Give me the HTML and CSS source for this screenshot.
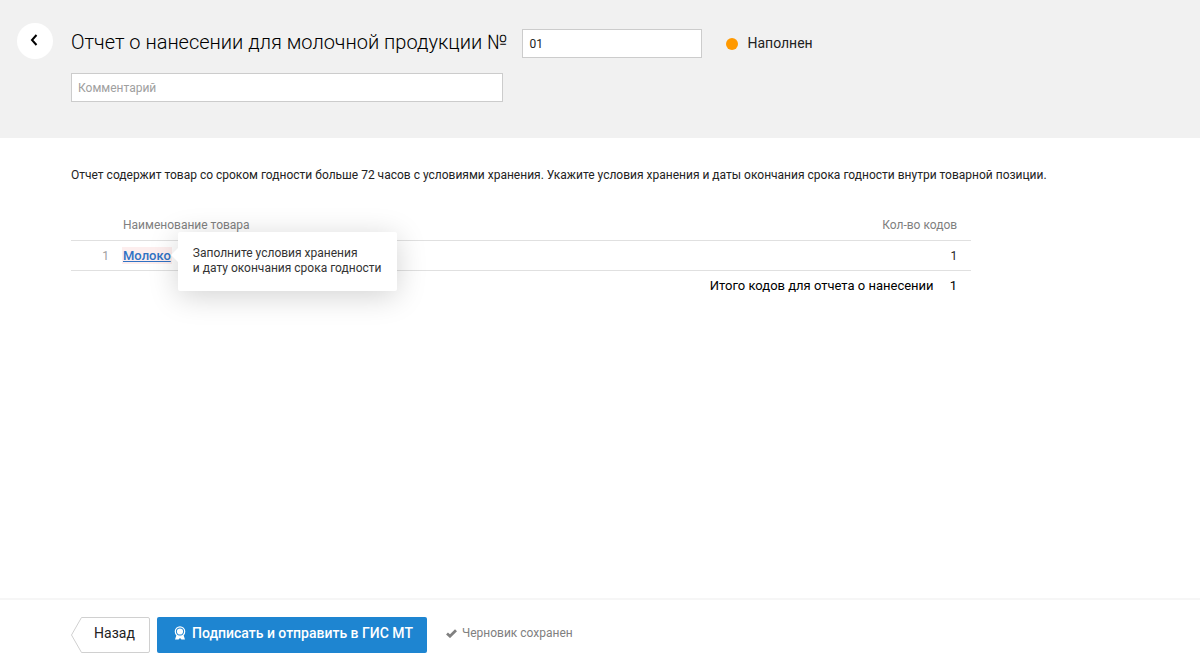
FILE: index.html
```
<!DOCTYPE html>
<html lang="ru">
<head>
    <meta charset="UTF-8">
    <meta name="viewport" content="width=device-width, initial-scale=1.0">
    <title>Отчет о нанесении для молочной продукции</title>
    <link rel="stylesheet" href="styles.css">
</head>
<body>
    <header class="header">
        <button type="button" class="round-btn" aria-label="Вернуться">
            <svg width="8" height="12" viewBox="0 0 8 12">
                <path d="M6.500 1L2 6l4.500 5" fill="none" stroke="#000" stroke-width="2"/>
            </svg>
        </button>
        <div class="header-content">
            <div class="title-row">
                <h1><label for="reportNumber">Отчет о нанесении для молочной продукции №</label></h1>
                <input type="text" id="reportNumber" class="input number-input" value="01">
                <span class="status">Наполнен</span>
            </div>
            <input type="text" class="input comment-input" placeholder="Комментарий" aria-label="Комментарий">
        </div>
    </header>

    <main class="content">
        <p class="notice">Отчет содержит товар со сроком годности больше 72 часов с условиями хранения. Укажите условия хранения и даты окончания срока годности внутри товарной позиции.</p>

        <table class="goods">
            <thead>
                <tr>
                    <th class="col-index"></th>
                    <th class="col-name">Наименование товара</th>
                    <th class="col-count">Кол-во кодов</th>
                </tr>
            </thead>
            <tbody>
                <tr>
                    <td class="col-index">1</td>
                    <td class="col-name">
                        <span class="product">
                            <a href="#" class="product-link">Молоко</a>
                            <span class="tooltip" role="tooltip">Заполните условия хранения<br>и дату окончания срока годности</span>
                        </span>
                    </td>
                    <td class="col-count">1</td>
                </tr>
            </tbody>
            <tfoot>
                <tr>
                    <td class="total" colspan="3">Итого кодов для отчета о нанесении <span class="total-count">1</span></td>
                </tr>
            </tfoot>
        </table>
    </main>

    <footer class="footer">
        <button type="button" class="back-btn">
            <svg class="back-shape" width="80" height="36" viewBox="0 0 80 36">
                <path d="M10.500 .5H77a1.500 1.500 0 0 1 1.500 1.500v32a1.500 1.500 0 0 1-1.500 1.500H10.500L.5 18z" fill="#fff" stroke="#d0d0d0"/>
            </svg>
            <span class="back-text">Назад</span>
        </button>
        <button type="button" class="btn">
            <svg width="12" height="14" viewBox="0 0 12 14">
                <path d="M2.500 9L1 13.500h3.500L6 12l1.500 1.500H11L9.500 9z" fill="#fff"/>
                <circle cx="6" cy="5.500" r="4.700" fill="#1e85d1" stroke="#fff" stroke-width="1.200"/>
                <circle cx="6" cy="5.500" r="3.100" fill="#fff"/>
            </svg>
            Подписать и отправить в ГИС МТ
        </button>
        <span class="saved">
            <svg width="11" height="9" viewBox="0 0 11 9">
                <path d="M1 4.500l3 2.700L10 1.300" fill="none" stroke="#808080" stroke-width="2.800"/>
            </svg>
            Черновик сохранен
        </span>
    </footer>
</body>
</html>
```
FILE: styles.css
```
* {
    margin: 0;
    padding: 0;
    box-sizing: border-box;
}

body {
    display: flex;
    flex-direction: column;
    min-height: 100vh;
    font-family: Roboto, 'Liberation Sans', sans-serif;
    font-size: 12px;
    line-height: 15px;
    color: #222;
    background: #fff;
}

button,
input {
    font: inherit;
    color: inherit;
}

button {
    border: none;
    cursor: pointer;
}

.header {
    display: flex;
    align-items: flex-start;
    gap: 18px;
    padding: 23px 17px 36px;
    background: #f1f1f1;
}

.round-btn {
    display: flex;
    flex: none;
    align-items: center;
    justify-content: center;
    width: 36px;
    height: 36px;
    padding: 0 2px 2px 0;
    border-radius: 50%;
    background: #fff;
}

.header-content {
    padding-top: 6px;
}

.title-row {
    display: flex;
    align-items: center;
    margin-bottom: 15px;
}

h1 {
    margin-right: 15px;
    padding-bottom: 4px;
    font-size: 20px;
    font-weight: 300;
    line-height: 24px;
    color: #000;
}

.input {
    height: 29px;
    padding: 0 6px;
    border: 1px solid #ccc;
    background: #fff;
}

.input::placeholder {
    color: #a0a0a0;
}

.number-input {
    width: 180px;
}

.comment-input {
    display: block;
    width: 432px;
}

.status {
    display: flex;
    align-items: center;
    gap: 9px;
    margin-left: 24px;
    font-size: 14px;
}

.status::before {
    content: '';
    width: 12px;
    height: 12px;
    border-radius: 50%;
    background: #f90;
}

.content {
    flex: 1;
    padding: 30px 70px 30px 71px;
}

.notice {
    margin-bottom: 27px;
}

.goods {
    width: 85%;
    border-collapse: collapse;
}

.goods th,
.goods td {
    height: 30px;
    padding-top: 2px;
    text-align: left;
    font-weight: 400;
}

.goods th {
    color: #808080;
}

.goods thead tr,
.goods tbody tr {
    border-bottom: 1px solid #e0e0e0;
}

.goods .col-index {
    width: 52px;
    padding-right: 14px;
    text-align: right;
    color: #a0a0a0;
}

.goods .col-count {
    width: 100px;
    padding-right: 14px;
    text-align: right;
}

.goods .total {
    padding-top: 0;
    padding-right: 14px;
    text-align: right;
    font-size: 13px;
    color: #000;
}

.total-count {
    margin-left: 13px;
}

.product {
    position: relative;
    display: inline-block;
}

.product-link {
    font-size: 13px;
    font-weight: 500;
    color: #3072c4;
    background: #fdeeee;
    box-shadow: 0 0 0 1px #fdeeee;
}

.tooltip {
    position: absolute;
    top: 50%;
    left: 100%;
    margin-left: 7px;
    padding: 14px 15px 15px;
    border-radius: 2px;
    color: #333;
    white-space: nowrap;
    background: #fff;
    box-shadow: 0 5px 30px rgba(0, 0, 0, 0.18);
    transform: translateY(-24px);
}

.tooltip::before {
    content: '';
    position: absolute;
    top: 16px;
    left: -7px;
    border: 7px solid transparent;
    border-left: none;
    border-right-color: #fff;
}

.footer {
    display: flex;
    align-items: center;
    height: 70px;
    padding: 1px 71px 0;
    border-top: 2px solid #f6f6f6;
}

.back-btn {
    position: relative;
    width: 79px;
    height: 36px;
    margin-right: 7px;
    padding: 0 0 3px 8px;
    font-size: 14px;
    background: none;
}

.back-shape {
    position: absolute;
    top: 0;
    left: 0;
}

.back-text {
    position: relative;
}

.btn {
    display: flex;
    align-items: center;
    gap: 6px;
    height: 36px;
    padding: 0 14px 3px 17px;
    border-radius: 2px;
    font-size: 14px;
    font-weight: 500;
    color: #fff;
    background: #1e85d1;
}

.saved {
    display: flex;
    align-items: center;
    gap: 5px;
    margin-left: 19px;
    padding-bottom: 2px;
    color: #808080;
}
```
